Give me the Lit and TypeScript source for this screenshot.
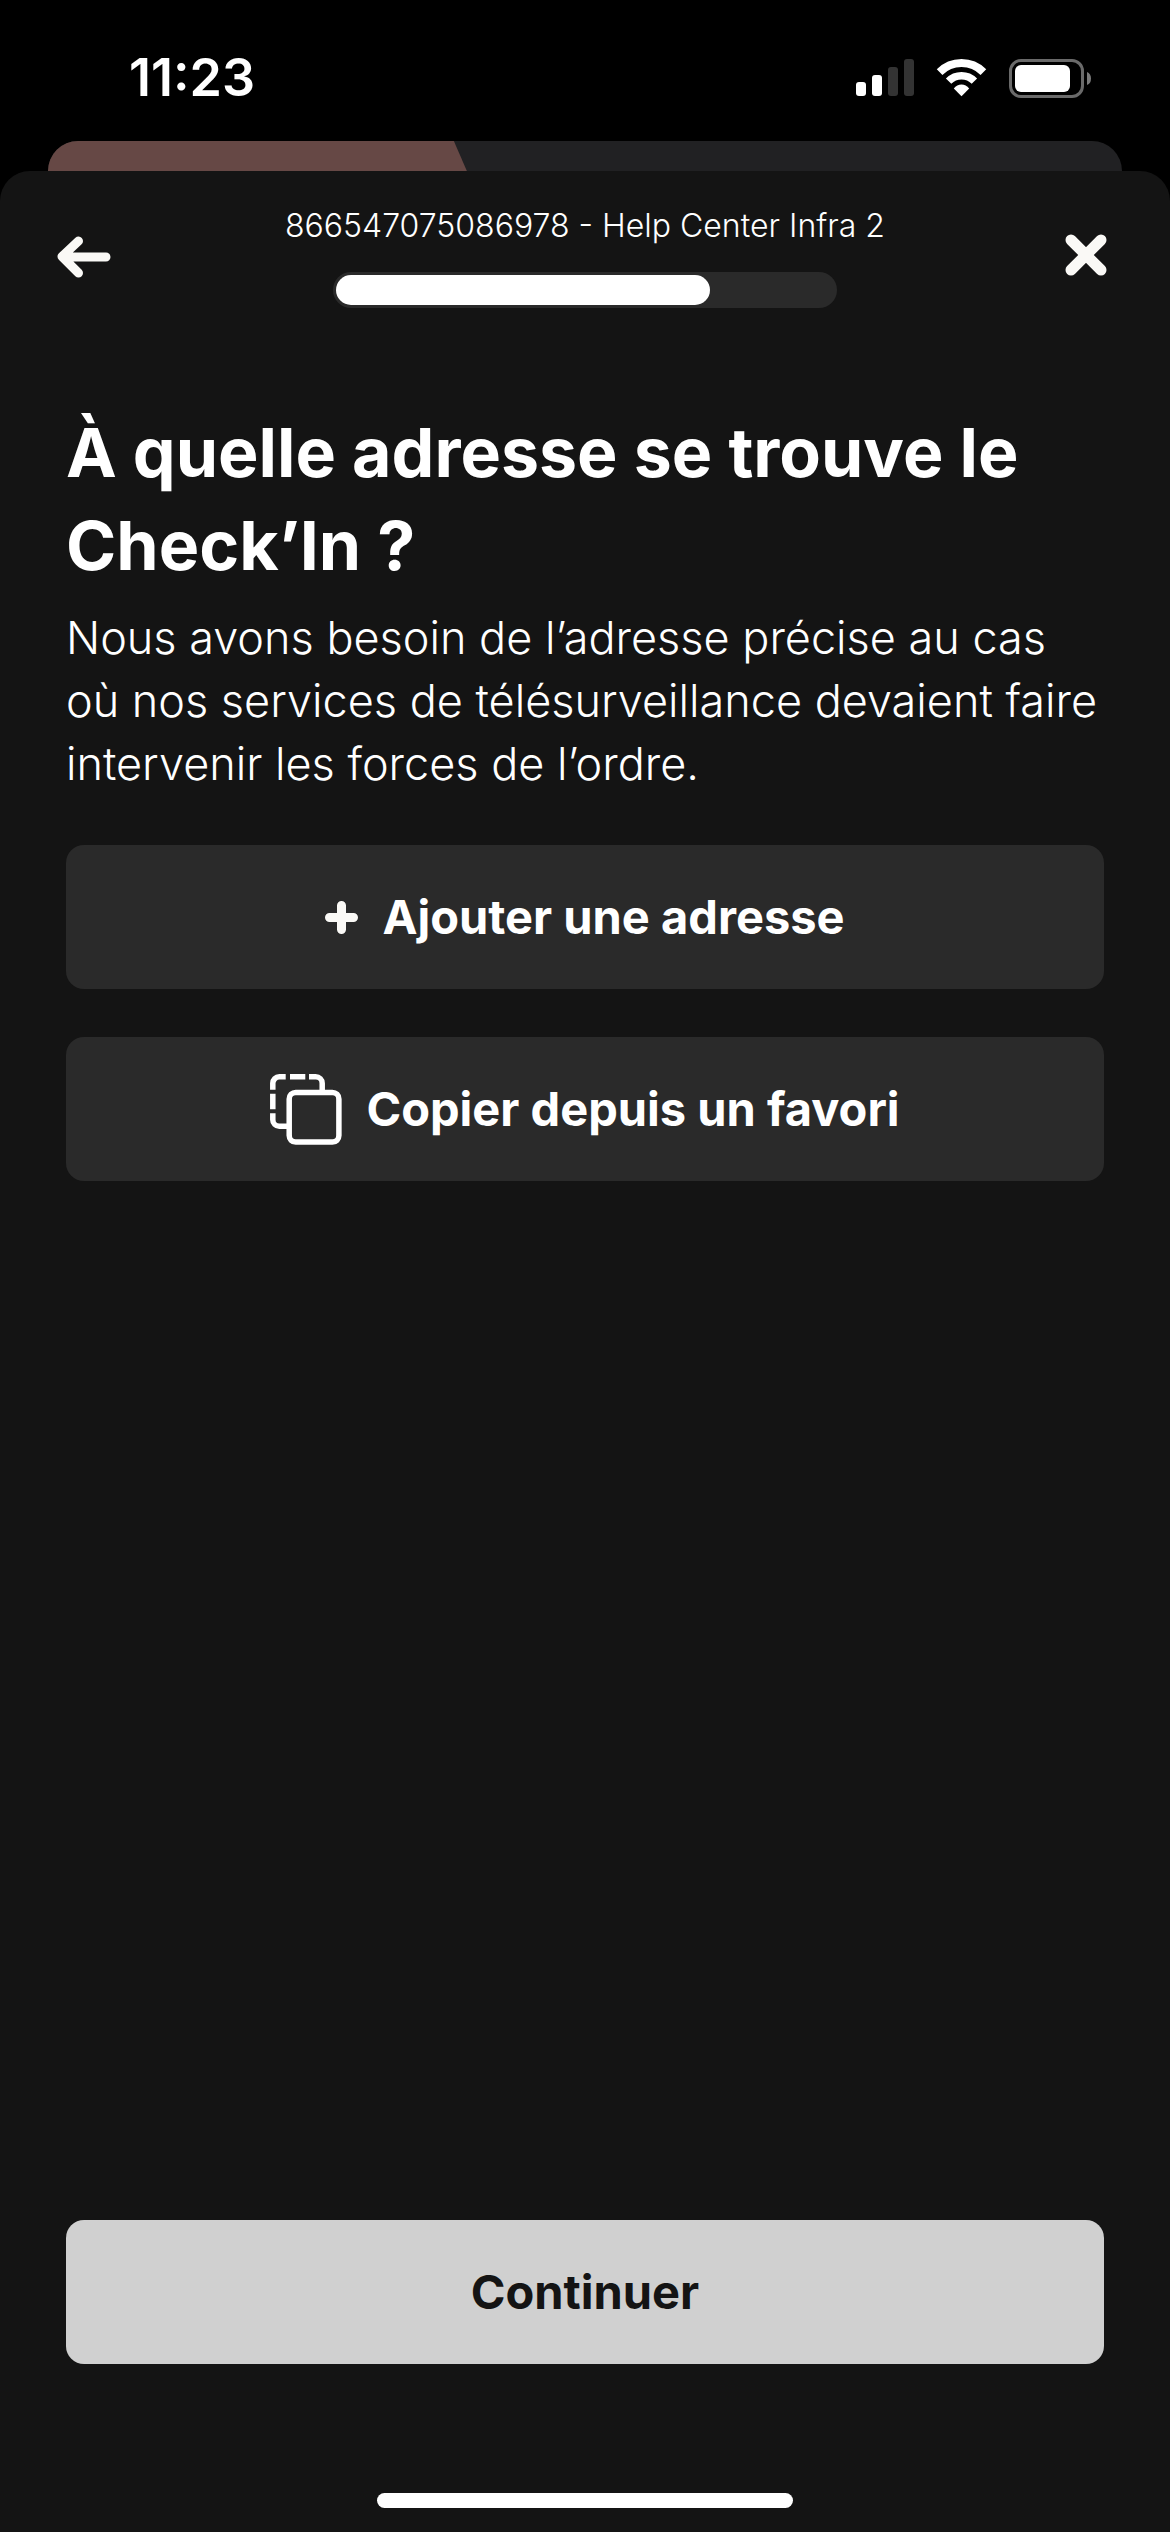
import { LitElement, html, css } from "lit";
import { customElement, property } from "lit/decorators.js";

@customElement("status-bar")
export class StatusBar extends LitElement {
  static styles = css`
    :host {
      display: flex;
      justify-content: space-between;
      align-items: center;
      padding: 48px 79px 33px 129px;
    }
    .time {
      font-size: 52px;
      line-height: 60px;
      font-weight: 600;
    }
    .icons {
      display: flex;
      align-items: center;
      gap: 22px;
    }
    svg {
      display: block;
    }
  `;

  render() {
    return html`
      <time class="time">11:23</time>
      <div class="icons">
        <svg width="58" height="38" viewBox="0 0 58 38" fill="#fff" aria-hidden="true">
          <rect x="0" y="23" width="10" height="14" rx="3" />
          <rect x="16" y="16" width="10" height="21" rx="3" />
          <rect x="32" y="8" width="10" height="29" rx="3" fill="#333" />
          <rect x="48" y="0" width="10" height="37" rx="3" fill="#333" />
        </svg>
        <svg width="51" height="38" viewBox="0 0 51 38" fill="none" stroke="#fff" aria-hidden="true">
          <path stroke-width="8" d="M3.6 13.1A31 31 0 0 1 47.4 13.1" />
          <path stroke-width="7.6" d="M12.6 22.1A18.2 18.2 0 0 1 38.4 22.1" />
          <path stroke="none" fill="#fff" d="M17.8 29.4Q21 25.6 25.5 25.6T33.2 29.4L25.5 37.2Z" />
        </svg>
        <svg width="82" height="39" viewBox="0 0 82 39" aria-hidden="true">
          <rect x="1.5" y="1.5" width="72" height="36" rx="10.5" fill="none" stroke="#6a6a6a" stroke-width="3" />
          <rect x="6" y="6" width="55" height="27" rx="6" fill="#fff" />
          <path d="M78 13Q82 14.5 82 19.5T78 26Z" fill="#7a7a7a" />
        </svg>
      </div>
    `;
  }
}

@customElement("sheet-header")
export class SheetHeader extends LitElement {
  @property() title = "";
  @property({ type: Number }) progress = 0;

  static styles = css`
    :host {
      display: flex;
      justify-content: space-between;
      align-items: center;
      padding: 35px 48px 0;
    }
    button {
      display: grid;
      place-items: center;
      width: 72px;
      height: 72px;
      padding: 0;
      border: 0;
      background: none;
      color: #faf9f6;
    }
    svg {
      display: block;
    }
    .middle {
      display: flex;
      flex-direction: column;
      align-items: center;
      gap: 26px;
    }
    .title {
      font-size: 32px;
      line-height: 40px;
      font-weight: 300;
    }
    .track {
      box-sizing: border-box;
      width: 504px;
      height: 36px;
      padding: 3px;
      border-radius: 18px;
      background: #2a2a2a;
    }
    .fill {
      height: 100%;
      border-radius: 15px;
      background: #fff;
    }
  `;

  render() {
    return html`
      <button type="button" aria-label="Retour">
        <svg width="54" height="42" viewBox="0 0 54 42" fill="none" stroke="currentColor" stroke-width="9" stroke-linecap="round" stroke-linejoin="round">
          <path d="M21.5 5L5 20.5L21.5 37M6 21H49" />
          <path d="M8 20.8L14 15V27Z" fill="currentColor" stroke="none" />
        </svg>
      </button>
      <div class="middle">
        <div class="title">${this.title}</div>
        <div
          class="track"
          role="progressbar"
          aria-valuemin="0"
          aria-valuemax="100"
          aria-valuenow=${this.progress}
          aria-label="Progression"
        >
          <div class="fill" style="width:${this.progress}%"></div>
        </div>
      </div>
      <button type="button" aria-label="Fermer">
        <svg width="42" height="46" viewBox="0 0 42 46" fill="none" stroke="currentColor" stroke-width="11" stroke-linecap="round">
          <path d="M6 6L36 36M36 6L6 36" />
        </svg>
      </button>
    `;
  }
}

@customElement("app-root")
export class AppRoot extends LitElement {
  static styles = css`
    :host {
      display: flex;
      flex-direction: column;
      min-height: 100vh;
      background: #000;
      color: #fff;
      font-family: Inter, "Liberation Sans", sans-serif;
    }
    .behind {
      height: 30px;
      margin: 0 48px;
      border-radius: 30px 30px 0 0;
      background: #212123;
      overflow: hidden;
    }
    .tint {
      width: 39%;
      height: 100%;
      background: #664845;
      clip-path: polygon(0 0, calc(100% - 13px) 0, 100% 100%, 0 100%);
    }
    .sheet {
      flex: 1;
      display: flex;
      flex-direction: column;
      border-radius: 30px 30px 0 0;
      background: #141414;
    }
    .content {
      flex: 1;
      display: flex;
      flex-direction: column;
      padding: 98px 66px 0;
    }
    h1 {
      margin: 0;
      font-size: 68px;
      line-height: 93px;
      font-weight: 700;
    }
    p {
      margin: 14px 0 0;
      font-size: 45px;
      line-height: 63px;
      font-weight: 300;
    }
    .choices {
      display: flex;
      flex-direction: column;
      gap: 48px;
      margin-top: 50px;
    }
    .action {
      display: flex;
      justify-content: center;
      align-items: center;
      gap: 24px;
      width: 100%;
      height: 144px;
      padding: 0;
      border: 0;
      border-radius: 18px;
      background: #2a2a2a;
      color: #fff;
      font-family: inherit;
      font-size: 47px;
      line-height: 60px;
      font-weight: 700;
    }
    .action svg {
      display: block;
      flex: none;
    }
    .primary {
      margin-top: auto;
      background: #d0d0d0;
      color: #141414;
    }
    .home {
      align-self: center;
      width: 416px;
      height: 15px;
      margin: 129px 0 24px;
      border-radius: 8px;
      background: #fff;
    }
  `;

  render() {
    return html`
      <status-bar></status-bar>
      <div class="behind"><div class="tint"></div></div>
      <div class="sheet">
        <sheet-header title="866547075086978 - Help Center Infra 2" progress="75"></sheet-header>
        <main class="content">
          <h1>À quelle adresse se trouve le Check’In&nbsp;?</h1>
          <p>
            Nous avons besoin de l’adresse précise au cas où&nbsp;nos services de
            télésurveillance devaient faire intervenir les forces de l’ordre.
          </p>
          <div class="choices">
            <button class="action" type="button">
              <svg width="33" height="33" viewBox="0 0 33 33" fill="none" stroke="#faf9f6" stroke-width="9" stroke-linecap="round" aria-hidden="true">
                <path d="M16.5 4.5V28.5M4.5 16.5H28.5" />
              </svg>
              <span>Ajouter une adresse</span>
            </button>
            <button class="action" type="button">
              <svg width="72" height="71" viewBox="0 0 72 71" fill="none" stroke="#fff" stroke-width="5.5" aria-hidden="true">
                <rect x="19.2" y="18.4" width="49.7" height="49.7" rx="6.5" />
                <path d="M15.7 2.8H9.3A6.5 6.5 0 0 0 2.8 9.3V15.7M20 2.8H35.3M39 2.8H45.7A6.5 6.5 0 0 1 52.2 9.3V16M2.8 19.7V35.3M2.8 39.3V45.7A6.5 6.5 0 0 0 9.3 52.2H17" />
              </svg>
              <span>Copier depuis un favori</span>
            </button>
          </div>
          <button class="action primary" type="button">Continuer</button>
        </main>
        <div class="home"></div>
      </div>
    `;
  }
}
